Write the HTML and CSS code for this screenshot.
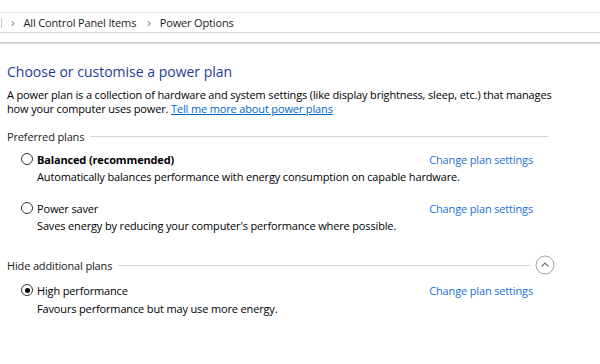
FILE: index.html
```html
<!DOCTYPE html>
<html lang="en">

<head>
    <meta charset="UTF-8">
    <title>Power Options</title>
    <link rel="stylesheet" href="styles.css">
</head>

<body>
    <div class="address-top"></div>
    <div class="breadcrumb">
        <span class="crumb-edge"></span>
        <span class="sep">&#8250;</span>
        <span class="crumb">All Control Panel Items</span>
        <span class="sep">&#8250;</span>
        <span class="crumb">Power Options</span>
    </div>
    <div class="toolbar-line"></div>

    <div class="content">
        <h1>Choose or customise a power plan</h1>
        <p class="intro">A power plan is a collection of hardware and system settings (like display brightness, sleep, etc.) that manages<br>
            how your computer uses power. <a href="#">Tell me more about power plans</a></p>

        <div class="group-title">
            <span>Preferred plans</span>
            <span class="rule"></span>
        </div>

        <div class="plan">
            <div class="plan-head">
                <span class="radio"></span>
                <span class="plan-name bold">Balanced (recommended)</span>
                <a class="plan-link" href="#">Change plan settings</a>
            </div>
            <div class="plan-desc">Automatically balances performance with energy consumption on capable hardware.</div>
        </div>

        <div class="plan">
            <div class="plan-head">
                <span class="radio"></span>
                <span class="plan-name">Power saver</span>
                <a class="plan-link" href="#">Change plan settings</a>
            </div>
            <div class="plan-desc">Saves energy by reducing your computer's performance where possible.</div>
        </div>

        <div class="group-title extra">
            <span>Hide additional plans</span>
            <span class="rule short"></span>
            <span class="collapse">
                <svg width="20" height="20" viewBox="0 0 20 20">
                    <circle cx="10" cy="10" r="9" fill="#fff" stroke="#a0a0a0" stroke-width="1"/>
                    <path d="M6.5 11.5 L10 8 L13.5 11.5" fill="none" stroke="#707070" stroke-width="1.2"/>
                </svg>
            </span>
        </div>

        <div class="plan last">
            <div class="plan-head">
                <span class="radio checked"></span>
                <span class="plan-name">High performance</span>
                <a class="plan-link" href="#">Change plan settings</a>
            </div>
            <div class="plan-desc">Favours performance but may use more energy.</div>
        </div>
    </div>
</body>

</html>
```

FILE: styles.css
```css
body {
    margin: 0;
    background-color: #fff;
    color: #000;
    font-family: 'Open Sans', 'Noto Sans', sans-serif;
    font-size: 11px;
    letter-spacing: -0.15px;
    overflow: hidden;
}

.address-top {
    height: 12px;
    border-bottom: 1px solid #e3e3e3;
}

.breadcrumb {
    height: 19px;
    display: flex;
    align-items: center;
    border-bottom: 1px solid #dadada;
    font-size: 11px;
    color: #1a1a1a;
}

.crumb-edge {
    width: 1px;
    height: 10px;
    background-color: #c8c8c8;
    margin-left: 1px;
}

.sep {
    color: #808080;
    font-size: 12px;
    margin: 0 9px;
}

.crumb + .sep {
    margin-left: 11px;
}

.toolbar-line {
    margin-top: 9px;
    height: 2px;
    background-color: #d6d6d6;
}

.content {
    padding: 0 7px;
}

h1 {
    margin: 18px 0 0;
    font-size: 14px;
    font-weight: normal;
    color: #1e3c96;
    line-height: 20px;
    letter-spacing: 0;
}

.intro {
    margin: 6px 0 0;
    line-height: 14px;
    white-space: nowrap;
}

a {
    color: #0066cc;
}

.group-title {
    display: flex;
    align-items: center;
    margin-top: 13px;
    height: 14px;
    color: #1a1a1a;
}

.rule {
    flex: 1;
    height: 1px;
    background-color: #d4d4d4;
    margin: 0 45px 0 6px;
}

.plan {
    padding-left: 14px;
}

.plan + .plan {
    padding-top: 6px;
}

.plan-head {
    display: flex;
    align-items: center;
    margin-top: 10px;
    height: 16px;
}

.group-title + .plan .plan-head {
    margin-top: 8px;
}

.radio {
    width: 10px;
    height: 10px;
    border: 1px solid #333;
    border-radius: 50%;
    margin-right: 4px;
    position: relative;
}

.radio.checked::after {
    content: "";
    position: absolute;
    left: 2.5px;
    top: 2.5px;
    width: 5px;
    height: 5px;
    border-radius: 50%;
    background-color: #000;
}

.bold {
    font-weight: bold;
}

.plan-link {
    margin-left: auto;
    margin-right: 60px;
    color: #1a6fd6;
    text-decoration: none;
}

.plan-desc {
    padding-left: 16px;
    margin-top: 3px;
    line-height: 14px;
}

.plan.last .plan-head {
    margin-top: 10px;
}

.plan.last .plan-desc {
    margin-top: 4px;
}

.group-title.extra {
    margin-top: 25px;
}

.rule.short {
    margin-right: 5px;
}

.collapse {
    display: flex;
    margin-right: 38px;
}
```
